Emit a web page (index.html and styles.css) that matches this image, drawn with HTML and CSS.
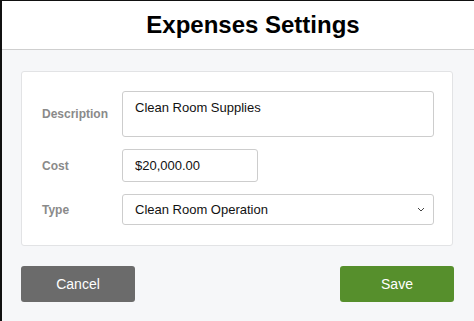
FILE: index.html
```html
<!DOCTYPE html>
<html lang="en">
<head>
  <meta charset="UTF-8" />
  <meta name="viewport" content="width=device-width, initial-scale=1.0" />
  <title>Expenses Settings</title>
  <link rel="stylesheet" href="styles.css">
</head>
<body>
  <div class="dialog">
    <header class="dialog-head">
      <h1>Expenses Settings</h1>
    </header>

    <div class="dialog-body">
      <form class="card">
        <div class="row">
          <label class="label">Description</label>
          <div class="field field-area">Clean Room Supplies</div>
        </div>
        <div class="row">
          <label class="label">Cost</label>
          <div class="field field-cost">$20,000.00</div>
        </div>
        <div class="row">
          <label class="label">Type</label>
          <div class="field field-select">
            <span>Clean Room Operation</span>
            <svg class="chevron" width="8" height="5" viewBox="0 0 8 5"><path d="M1 1 L4 4 L7 1" fill="none" stroke="#444" stroke-width="1"/></svg>
          </div>
        </div>
      </form>

      <div class="actions">
        <button class="btn btn-cancel" type="button">Cancel</button>
        <button class="btn btn-save" type="button">Save</button>
      </div>
    </div>
  </div>
</body>
</html>
```

FILE: styles.css
```css
* {
  box-sizing: border-box;
}

body {
  margin: 0;
  background: #fff;
  font-family: 'Liberation Sans', Arial, sans-serif;
  color: #111;
}

.dialog {
  width: 474px;
  height: 321px;
  border-top: 1px solid #111;
  border-left: 2px solid #111;
  background: #f6f7f9;
}

.dialog-head {
  height: 49px;
  background: #fff;
  border-bottom: 1px solid #cfcfcf;
  display: flex;
  align-items: center;
  justify-content: center;
  padding-left: 30px;
}

.dialog-head h1 {
  margin: 0;
  font-size: 24px;
  font-weight: bold;
  color: #000;
}

.dialog-body {
  padding: 21px 20px 0 19px;
}

.card {
  background: #fff;
  border: 1px solid #e2e3e5;
  border-radius: 3px;
  margin-right: 1px;
  padding: 19px 18px 20px 20px;
  display: flex;
  flex-direction: column;
  gap: 12px;
}

.row {
  display: flex;
  align-items: center;
}

.label {
  width: 80px;
  font-size: 12px;
  font-weight: bold;
  color: #8a8a8a;
}

.field {
  border: 1px solid #cdcdcd;
  border-radius: 3px;
  font-size: 13px;
  color: #111;
  padding: 0 12px;
  display: flex;
  align-items: center;
}

.field-area {
  flex: 1;
  height: 46px;
  align-items: flex-start;
  padding-top: 8px;
}

.field-cost {
  width: 136px;
  height: 33px;
}

.field-select {
  flex: 1;
  height: 31px;
  justify-content: space-between;
  padding-right: 8px;
}

.actions {
  display: flex;
  justify-content: space-between;
  margin-top: 20px;
}

.btn {
  width: 114px;
  height: 36px;
  border: none;
  border-radius: 3px;
  color: #fff;
  font-family: inherit;
  font-size: 14px;
}

.btn-cancel {
  background: #6b6b6b;
}

.btn-save {
  background: #568f2c;
}
```
